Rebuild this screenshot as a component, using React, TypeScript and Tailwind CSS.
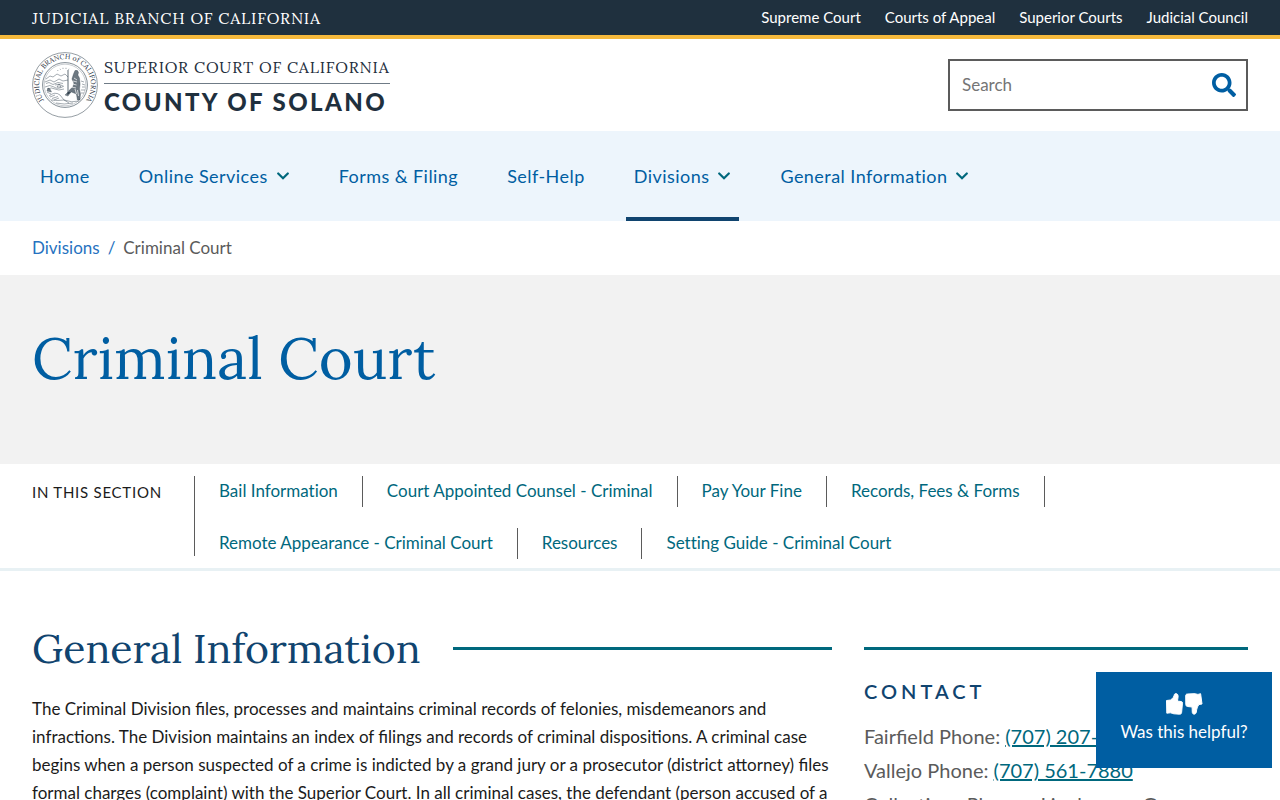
import { FaSearch } from 'react-icons/fa';

const branchLinks = ['Supreme Court', 'Courts of Appeal', 'Superior Courts', 'Judicial Council'];

const navItems = [
  { label: 'Home', menu: false, active: false },
  { label: 'Online Services', menu: true, active: false },
  { label: 'Forms & Filing', menu: false, active: false },
  { label: 'Self-Help', menu: false, active: false },
  { label: 'Divisions', menu: true, active: true },
  { label: 'General Information', menu: true, active: false },
];

const sectionLinks = [
  'Bail Information',
  'Court Appointed Counsel - Criminal',
  'Pay Your Fine',
  'Records, Fees & Forms',
  'Remote Appearance - Criminal Court',
  'Resources',
  'Setting Guide - Criminal Court',
];

function Seal() {
  return (
    <svg viewBox="0 0 66 66" className="size-[66px] shrink-0" fill="none" stroke="#1f303e" aria-hidden="true">
      <circle cx="33" cy="33" r="32.4" strokeWidth="0.6" strokeOpacity="0.8" />
      <circle cx="33" cy="33" r="22.4" strokeWidth="0.7" strokeOpacity="0.8" />
      <circle cx="33" cy="33" r="20.8" strokeWidth="0.4" strokeOpacity="0.6" />
      <path id="seal-arc" d="M11.4 47.5 A26 26 0 1 1 54.6 47.5" stroke="none" />
      <text fill="#1f303e" stroke="none" className="font-['Lora','Liberation_Serif',serif] text-[7px]">
        <textPath href="#seal-arc" startOffset="50%" textAnchor="middle">
          JUDICIAL BRANCH of CALIFORNIA
        </textPath>
      </text>
      <g strokeWidth="0.5" strokeLinejoin="round" strokeOpacity="0.8">
        <path d="M14 27 l4 -3 3 1 4 -3 4 2 4 -2 3 3" />
        <path d="M13 30 l5 -2 4 2 5 -3 4 2 5 -1 M14 31.500 l3 -1 4 2 5 -2 5 1" />
        <path d="M13 35 q5 -3 9 0 t10 -1 M15 37 q5 -2 8 0 t9 0 M23 33 q4 -2 8 1 M25 35 l2 -3 2 3z" />
        <path d="M28 16.800 l.6 1 M31 15.800 v1.200 M34 15.800 v1.200 M37 16.800 l-.6 1 M25.500 18 l.6 1" />
        <path d="M36 18 V42" strokeWidth="0.9" />
        <path d="M17 44 q6 -5 11 -1 l4 5 q8 3 15 1 M19 48 q7 1 13 0 l5 3 M24 51 q8 2 17 0" />
        <path d="M15 40 l4 2 M18 45 l5 -2 M20 46.500 l6 -2 M22 48 l5 -2 M49 29 l3 1 M50 32 l3 1 M50 35 l3 0 M49 38 l4 0 M49 41 l3 0" />
      </g>
      <g fill="#1f303e" strokeWidth="0.3" strokeLinejoin="round">
        <path d="M43 18.500 q3 -1 3.500 2 l-.6 2.500 1.600 3 .6 6 -.6 5 1 5 -.6 6 h-2.500 l-1 -6 -5 -2 -4 2.500 2 -4.500 3.500 -3 1 -4 -2 -4 1.600 -5z" fillOpacity="0.65" />
        <path d="M33 43 l3 -3 2.500 .6 -2.500 3.500z M15 39 l1 -3 2 1 1.500 3z" fillOpacity="0.6" />
      </g>
      <path d="M42 26 l3 2 M41 29 l4 1 M40.500 32 l4 1 M40 35 l4 1 M43 37 l1.500 5 M45.500 38 l1 6" stroke="#fff" strokeWidth="0.7" />
    </svg>
  );
}

function Chevron() {
  return (
    <svg viewBox="0 0 14 8" className="h-2 w-3.5 text-[#00687d]" fill="none" stroke="currentColor" strokeWidth="2.2" strokeLinecap="round" aria-hidden="true">
      <path d="M2.200 1.500 L7 6.300 L11.800 1.500" />
    </svg>
  );
}

function Thumbs() {
  return (
    <svg viewBox="0 0 38 24" className="h-6 w-[38px]" fill="currentColor" stroke="currentColor" strokeWidth="1" strokeLinejoin="round" aria-hidden="true">
      <path d="M1.500 8.500 L5.500 8 C8 6.500 9 4.500 9.400 2.500 C10 1 13 1.300 13.100 4 C13.200 6 12.600 7.500 12.400 9 L16.500 9.600 C17.600 10 17.800 11 17.400 12 L16.600 20.500 C16.500 21.600 15.800 22.300 14.500 22.200 L9 21.800 C7 21.500 6 20.800 5.200 20.800 L1.800 21.200 Z" />
      <path d="M20.700 3.300 C21 2.200 21.700 2 22.600 2 L29 1.700 C31 1.700 32 2.300 33 2.400 L35.600 1.700 L37 12 L34 12.500 C32.300 14.500 31.700 17 31.300 20 C31 22.700 27.700 22.900 27.300 20.500 C27 18.500 27.300 16.800 27.100 15 L22.500 14.500 C21.300 14.300 20.800 13.500 20.800 12.500 Z" />
    </svg>
  );
}

export default function App() {
  return (
    <div className="bg-white font-['Lato',sans-serif] text-[17px] text-[#1b1b1b]">
      <div className="flex h-[39px] items-center justify-between border-b-4 border-[#f5b93d] bg-[#1f303e] px-8 text-white">
        <a href="#branch" className="font-['Lora','Liberation_Serif',serif] text-base leading-5 tracking-wider">
          JUDICIAL BRANCH OF CALIFORNIA
        </a>
        <nav aria-label="Judicial branch" className="flex gap-6 text-[15px]">
          {branchLinks.map((label) => (
            <a key={label} href="#branch">{label}</a>
          ))}
        </nav>
      </div>

      <header className="flex h-[92px] items-center justify-between px-8">
        <a href="#home" className="flex items-center gap-1.5">
          <Seal />
          <span className="flex flex-col text-[#1f303e]">
            <span className="border-b border-[#6f7b86] pb-1 font-['Lora','Liberation_Serif',serif] text-base leading-6 tracking-wider">
              SUPERIOR COURT OF CALIFORNIA
            </span>
            <span className="pt-1 text-2xl font-black leading-7 tracking-widest">COUNTY OF SOLANO</span>
          </span>
        </a>
        <form role="search" className="flex h-[52px] w-[300px] items-center border-2 border-[#5b5b5b]" onSubmit={(e) => e.preventDefault()}>
          <input
            type="search"
            aria-label="Search"
            placeholder="Search"
            className="min-w-0 flex-1 px-3 text-[17px] outline-none placeholder:text-[#757575]"
          />
          <button type="submit" aria-label="Submit search" className="px-2.5 text-[#005ea2]">
            <FaSearch className="size-6" />
          </button>
        </form>
      </header>

      <nav aria-label="Main" className="flex h-[90px] gap-[33px] bg-[#edf5fc] px-8 text-[18px] tracking-wide text-[#005ea2]">
        {navItems.map(({ label, menu, active }) =>
          menu ? (
            <button
              key={label}
              type="button"
              className={`flex items-center gap-2 border-y-4 border-t-transparent px-2 ${active ? 'border-b-[#10446f]' : 'border-b-transparent'}`}
            >
              {label}
              <Chevron />
            </button>
          ) : (
            <a key={label} href="#page" className="flex items-center px-2">{label}</a>
          ),
        )}
      </nav>

      <nav aria-label="Breadcrumb" className="flex h-[54px] items-center gap-2 px-8">
        <a href="#divisions" className="text-[#2672c0]">Divisions</a>
        <span className="text-[#2672c0]">/</span>
        <span className="text-[#5b5b5b]">Criminal Court</span>
      </nav>

      <div className="flex h-[189px] items-center bg-[#f2f2f2] px-8 pb-6">
        <h1 className="font-['Lora','Liberation_Serif',serif] text-[58px] leading-none text-[#005ea2]">Criminal Court</h1>
      </div>

      <section className="flex border-b-[3px] border-[#e8f1f4] px-8 py-3">
        <h2 className="w-[162px] shrink-0 pt-1.5 text-[15px] leading-5 tracking-wider">IN THIS SECTION</h2>
        <ul className="flex h-20 flex-wrap gap-y-[21px] border-l border-[#5b5b5b] [font-variant-ligatures:none]">
          {sectionLinks.map((label) => (
            <li key={label} className="h-[31px] border-r border-[#5b5b5b] px-6 leading-[30px] last:border-r-0">
              <a href="#section" className="text-[#00687d]">{label}</a>
            </li>
          ))}
        </ul>
      </section>

      <main className="grid grid-cols-[minmax(0,25fr)_minmax(0,12fr)] gap-8 px-8 pt-12">
        <section>
          <div className="flex items-center gap-8">
            <h2 className="font-['Lora','Liberation_Serif',serif] text-[41px] leading-[58px] text-[#10446f]">General Information</h2>
            <div className="h-[3px] flex-1 bg-[#00687d]" />
          </div>
          <p className="pt-[18px] leading-7">
            The Criminal Division files, processes and maintains criminal records of felonies, misdemeanors and
            infractions. The Division maintains an index of filings and records of criminal dispositions. A criminal case
            begins when a person suspected of a crime is indicted by a grand jury or a prosecutor (district attorney)
            files formal charges (complaint) with the Superior Court. In all criminal cases, the defendant (person
            accused of a
          </p>
        </section>
        <aside className="pt-7">
          <div className="h-[3px] bg-[#00687d]" />
          <h3 className="pt-7 text-xl font-semibold leading-[26px] tracking-[4px] text-[#10446f]">CONTACT</h3>
          <div className="pt-[15px] text-xl leading-[34px] text-[#5b5b5b]">
            <p>Fairfield Phone: <a href="#fairfield" className="text-[#00687d] underline">(707) 207-</a></p>
            <p>Vallejo Phone: <a href="#vallejo" className="text-[#00687d] underline">(707) 561-7880</a></p>
            <p>Collections Phone - Linebarger, Goggan</p>
          </div>
        </aside>
      </main>

      <button
        type="button"
        className="fixed right-2 bottom-8 flex h-24 w-44 flex-col items-center justify-center gap-1 bg-[#005ea2] pb-1 text-[17px] leading-6 text-white"
      >
        <Thumbs />
        Was this helpful?
      </button>
    </div>
  );
}
